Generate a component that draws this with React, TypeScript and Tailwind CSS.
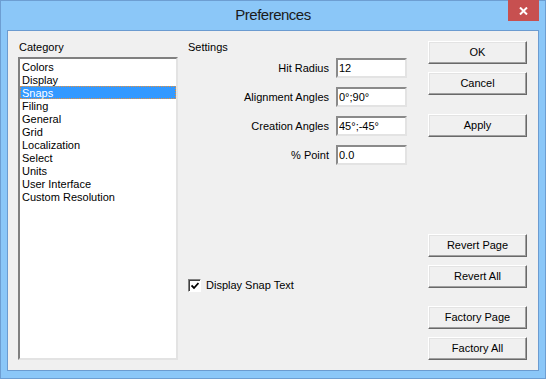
import { useState } from "react";

const categories = [
  "Colors",
  "Display",
  "Snaps",
  "Filing",
  "General",
  "Grid",
  "Localization",
  "Select",
  "Units",
  "User Interface",
  "Custom Resolution",
];

const settings = [
  { label: "Hit Radius", value: "12" },
  { label: "Alignment Angles", value: "0°;90°" },
  { label: "Creation Angles", value: "45°;-45°" },
  { label: "% Point", value: "0.0" },
];

function Button({ label, className = "" }: { label: string; className?: string }) {
  return (
    <button
      className={`flex h-[23px] w-[99px] items-center justify-center border border-t-white border-l-white border-r-[#696969] border-b-[#696969] bg-[#f0f0f0] text-[11px] leading-none text-black shadow-[inset_-1px_-1px_0_#a0a0a0,inset_1px_1px_0_#e3e3e3] ${className}`}
    >
      {label}
    </button>
  );
}

export default function App() {
  const [selected, setSelected] = useState("Snaps");
  const [snapText, setSnapText] = useState(true);

  return (
    <div className="flex h-[379px] w-[546px] flex-col border border-[#6d9ed2] bg-[#8bc7f8] font-['Liberation_Sans',Arial,sans-serif]">
      {/* Title bar */}
      <div className="relative flex h-[29px] items-center justify-center">
        <span className="text-[15px] tracking-[-0.5px] text-[#1b1b1b]">Preferences</span>
        <div className="absolute right-[6px] top-[-1px] flex h-[21px] w-[31px] items-center justify-center bg-[#c75050]">
          <svg width="9" height="8" viewBox="0 0 9 8">
            <path d="M1 0.5 L8 7.5 M8 0.5 L1 7.5" stroke="white" strokeWidth="2" />
          </svg>
        </div>
      </div>

      {/* Client area */}
      <div className="mx-[6px] mb-[7px] flex flex-1 border border-[#6b9bd0] bg-[#f0f0f0] pl-[10px] pt-[9px] text-[11px] leading-[13px] text-black">
        {/* Category */}
        <div className="flex w-[160px] flex-col">
          <div className="h-[17px] pl-[1px] pt-[1px]">Category</div>
          <div className="h-[303px] border-2 border-t-[#808080] border-l-[#808080] border-r-[#e3e3e3] border-b-[#e3e3e3] bg-white pt-[1px]">
            {categories.map((c) => (
              <div
                key={c}
                onClick={() => setSelected(c)}
                className={`h-[13px] border px-[1px] leading-[12px] ${
                  selected === c
                    ? "border-dotted border-[#e8913a] bg-[#3399ff] text-white"
                    : "border-transparent"
                }`}
              >
                {c}
              </div>
            ))}
          </div>
        </div>

        {/* Settings */}
        <div className="ml-[10px] flex w-[220px] flex-col">
          <div className="h-[18px] pt-[1px]">Settings</div>
          <div className="flex flex-col gap-[9px]">
            {settings.map((s) => (
              <div key={s.label} className="flex items-center">
                <div className="w-[141px] text-right">{s.label}</div>
                <input
                  defaultValue={s.value}
                  className="ml-[7px] h-[20px] w-[71px] border-2 border-t-[#8a8a8a] border-l-[#8a8a8a] border-r-[#e3e3e3] border-b-[#e3e3e3] bg-white pl-[1px] text-[11px] text-black outline-none"
                />
              </div>
            ))}
          </div>
          <label className="mt-[114px] flex items-center gap-[5px]" onClick={() => setSnapText(!snapText)}>
            <span className="flex h-[13px] w-[13px] items-center justify-center border border-t-[#808080] border-l-[#808080] border-r-white border-b-white bg-white shadow-[inset_1px_1px_0_#404040]">
              {snapText && (
                <svg width="8" height="8" viewBox="0 0 8 8">
                  <path d="M0.5 3.5 L3 6 L7.5 1" stroke="black" strokeWidth="1.8" fill="none" />
                </svg>
              )}
            </span>
            <span>Display Snap Text</span>
          </label>
        </div>

        {/* Buttons */}
        <div className="ml-[20px] flex flex-col pt-[1px]">
          <Button label="OK" />
          <Button label="Cancel" className="mt-[8px]" />
          <Button label="Apply" className="mt-[19px]" />
          <Button label="Revert Page" className="mt-[97px]" />
          <Button label="Revert All" className="mt-[8px]" />
          <Button label="Factory Page" className="mt-[18px]" />
          <Button label="Factory All" className="mt-[8px]" />
        </div>
      </div>
    </div>
  );
}
